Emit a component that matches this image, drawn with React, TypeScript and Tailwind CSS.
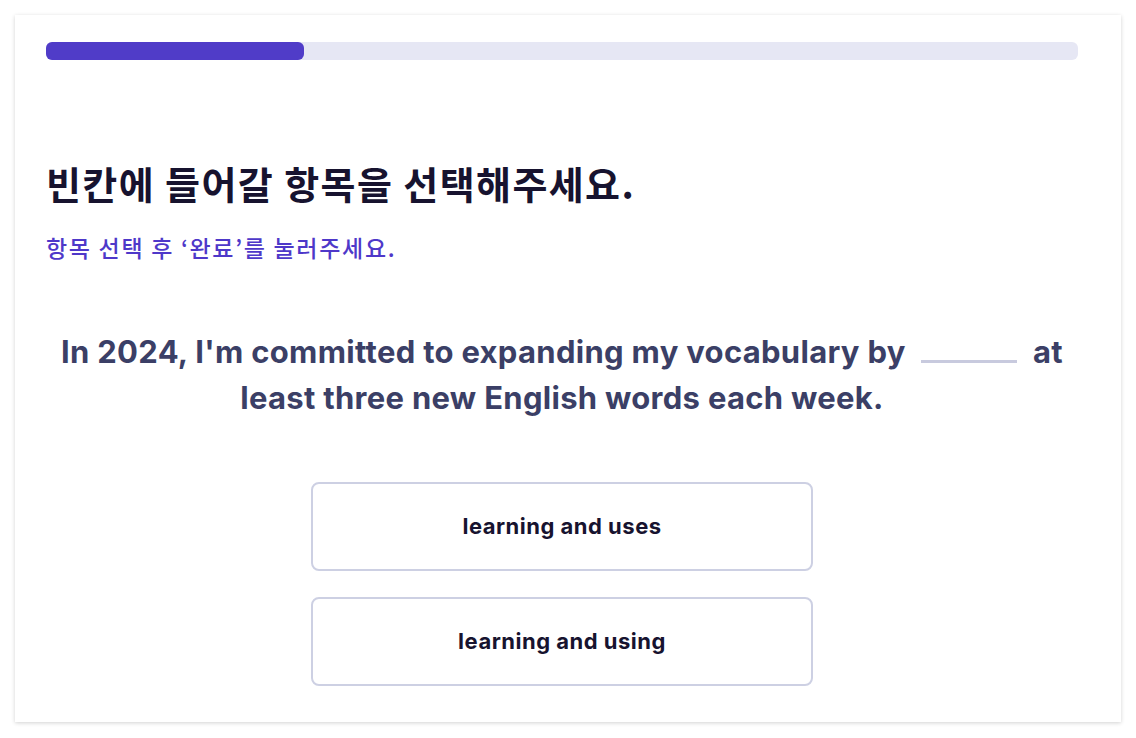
import React from "react";

export default function App() {
  return (
    <div className="min-h-[738px] w-full bg-white p-[15px] pb-[16px]" style={{ fontFamily: "Inter, 'Noto Sans CJK KR', sans-serif" }}>
      <div className="flex h-[707px] flex-col bg-white pl-[31px] pr-[43px] pt-[27px] shadow-[0_1px_4px_rgba(0,0,0,0.18)]">
        <div className="h-[18px] w-full rounded-[6px] bg-[#e6e7f4]">
          <div className="h-full w-[25%] rounded-[6px] bg-[#503cc8]" />
        </div>
        <h1
          className="mt-[100px] whitespace-nowrap text-[38px] font-bold leading-[46px] tracking-[1.4px] text-[#17132f]"
          style={{ fontFamily: "'Noto Sans CJK KR', Inter, sans-serif" }}
        >
          빈칸에 들어갈 항목을 선택해주세요.
        </h1>
        <p
          className="mt-[26px] whitespace-nowrap text-[23px] font-medium leading-[30px] tracking-[1.7px] text-[#4e38c9]"
          style={{ fontFamily: "'Noto Sans CJK KR', Inter, sans-serif" }}
        >
          항목 선택 후 ‘완료’를 눌러주세요.
        </p>
        <p className="mt-[67px] text-center text-[31px] font-bold leading-[46px] tracking-[0.3px] text-[#3b3f66]">
          In 2024, I'm committed to expanding my vocabulary by{" "}
          <span className="mx-[8px] inline-block h-[3px] w-[96px] align-baseline bg-[#c8cade]" />{" "}
          at least three new English words each week.
        </p>
        <div className="mt-[61px] flex flex-col items-center gap-[26px]">
          {["learning and uses", "learning and using"].map((t) => (
            <button
              key={t}
              className="flex h-[89px] w-[502px] items-center justify-center rounded-[8px] border-2 border-[#cdd0e3] bg-white text-[22px] font-bold tracking-[0.5px] text-[#17132f]"
            >
              {t}
            </button>
          ))}
        </div>
      </div>
    </div>
  );
}
